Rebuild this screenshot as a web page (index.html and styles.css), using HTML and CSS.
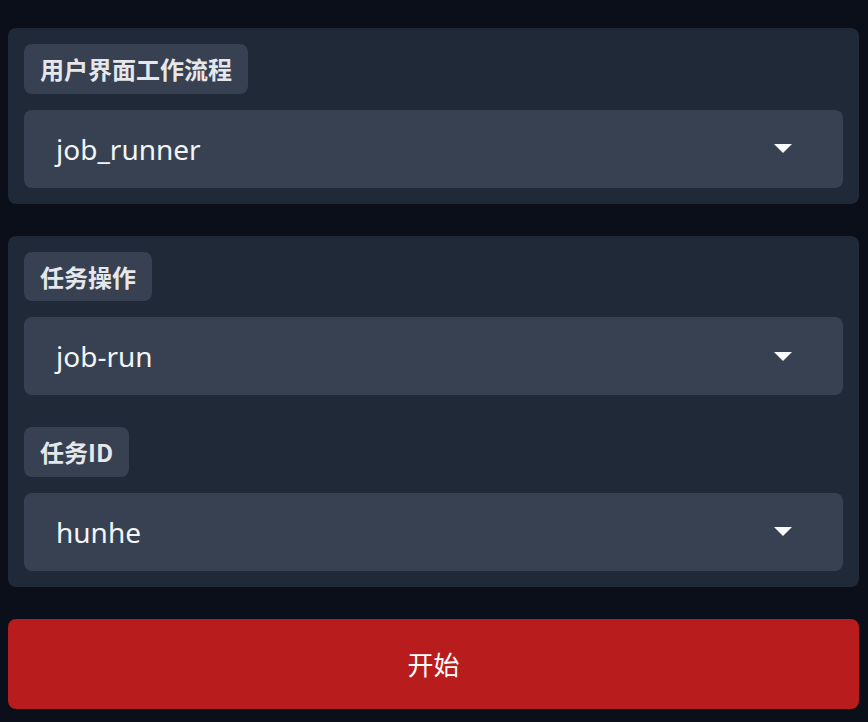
FILE: index.html
```html
<!DOCTYPE html>
<html lang="zh">
<head>
<meta charset="utf-8">
<link rel="stylesheet" href="styles.css">
</head>
<body>
<div class="page">
  <section class="panel">
    <div class="label">用户界面工作流程</div>
    <div class="select"><span class="value">job_runner</span><span class="caret"></span></div>
  </section>
  <section class="panel">
    <div class="label">任务操作</div>
    <div class="select"><span class="value">job-run</span><span class="caret"></span></div>
    <div class="label label-spaced">任务ID</div>
    <div class="select"><span class="value">hunhe</span><span class="caret"></span></div>
  </section>
  <button class="start">开始</button>
</div>
</body>
</html>
```
FILE: styles.css
```css
html, body {
  margin: 0;
  padding: 0;
  background: #0b0f19;
}
body {
  font-family: "Noto Sans", "Noto Sans CJK SC", sans-serif;
}
.page {
  padding: 28px 9px 0 8px;
  display: flex;
  flex-direction: column;
  gap: 32px;
}
.panel {
  background: #1f2937;
  border-radius: 8px;
  padding: 16px;
  display: flex;
  flex-direction: column;
  align-items: flex-start;
}
.label {
  background: #374151;
  color: #e5e7eb;
  font-family: "Noto Sans CJK SC", sans-serif;
  font-weight: 700;
  font-size: 24px;
  height: 49.5px;
  line-height: 49.5px;
  padding: 0 16px;
  border-radius: 8px;
  margin-bottom: 16px;
  box-sizing: border-box;
}
.label-spaced {
  margin-top: 32px;
}
.select {
  align-self: stretch;
  height: 78px;
  background: #374151;
  border-radius: 8px;
  display: flex;
  align-items: center;
  justify-content: space-between;
  padding: 0 51px 0 32px;
}
.value {
  color: #f3f4f6;
  font-size: 28px;
  font-family: "Noto Sans", sans-serif;
}
.caret {
  width: 0;
  height: 0;
  border-left: 9px solid transparent;
  border-right: 9px solid transparent;
  border-top: 9px solid #f9fafb;
}
.start {
  height: 90px;
  background: #b91c1c;
  border: none;
  border-radius: 8px;
  color: #ffffff;
  font-family: "Noto Sans CJK SC", sans-serif;
  font-size: 26px;
  cursor: pointer;
}
```
